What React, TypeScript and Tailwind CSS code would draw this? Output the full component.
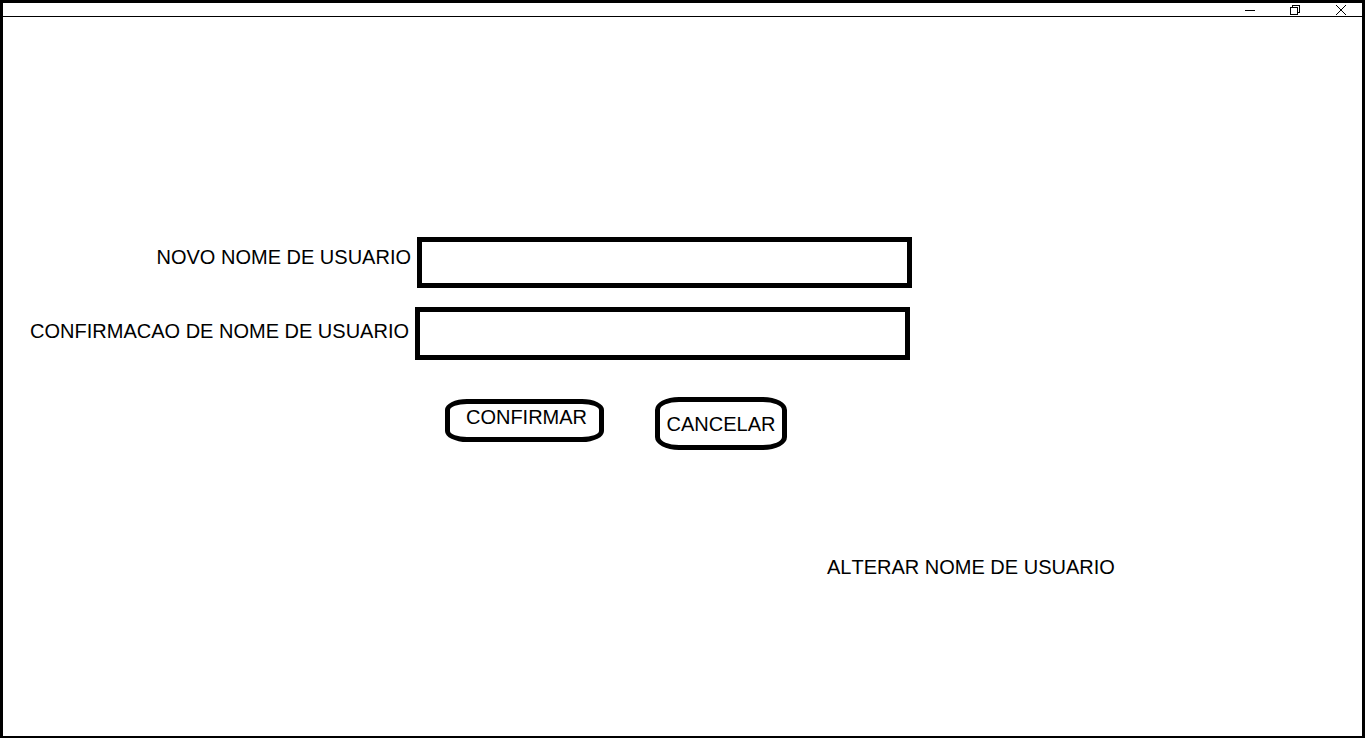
import type { ReactNode } from 'react';

function WindowButton({ label, children }: { label: string; children: ReactNode }) {
  return (
    <button type="button" aria-label={label} className="flex h-full w-10 items-center justify-center">
      <svg
        width="12"
        height="12"
        viewBox="0 0 12 12"
        fill="none"
        stroke="#000"
        strokeWidth="1"
        aria-hidden="true"
      >
        {children}
      </svg>
    </button>
  );
}

function TitleBar() {
  return (
    <header className="flex h-[14px] justify-end gap-1.5 border-b border-black pr-px">
      <WindowButton label="Minimizar">
        <path d="M2 6.5h10" shapeRendering="crispEdges" />
      </WindowButton>
      <WindowButton label="Restaurar">
        <path d="M1.5 3.5h7v7h-7zM3.5 3.5v-2h7v7h-2" shapeRendering="crispEdges" />
      </WindowButton>
      <WindowButton label="Fechar">
        <path d="M1 1l10 10M11 1L1 11" />
      </WindowButton>
    </header>
  );
}

export default function App() {
  return (
    <div className="mr-px flex min-h-screen flex-col border-[3px] border-b-2 border-black bg-white font-['Liberation_Sans',Arial,sans-serif] text-xl leading-6 text-black [font-kerning:none]">
      <TitleBar />
      <main className="flex-1 pt-[220px]">
        <form onSubmit={(event) => event.preventDefault()}>
          <div className="flex items-start gap-1.5">
            <label htmlFor="novo-nome" className="w-[408px] shrink-0 pt-2 text-right">
              NOVO NOME DE USUARIO
            </label>
            <input id="novo-nome" type="text" className="h-[51px] w-[495px] border-5 border-black px-2 outline-none" />
          </div>
          <div className="mt-[19px] flex items-start gap-1.5">
            <label htmlFor="confirmacao-nome" className="w-[406px] shrink-0 pt-3 text-right">
              CONFIRMACAO DE NOME DE USUARIO
            </label>
            <input
              id="confirmacao-nome"
              type="text"
              className="h-[53px] w-[495px] border-5 border-black px-2 outline-none"
            />
          </div>
          <div className="mt-[37px] flex items-start gap-[51px] pl-[442px]">
            <button
              type="submit"
              className="mt-0.5 h-[43px] w-[159px] rounded-[22px/11px] border-5 border-black pb-2 pl-1"
            >
              CONFIRMAR
            </button>
            <button type="button" className="h-[53px] w-[132px] rounded-[24px/13px] border-5 border-black">
              CANCELAR
            </button>
          </div>
        </form>
        <h1 className="mt-[105px] pl-[824px] font-normal">ALTERAR NOME DE USUARIO</h1>
      </main>
    </div>
  );
}
